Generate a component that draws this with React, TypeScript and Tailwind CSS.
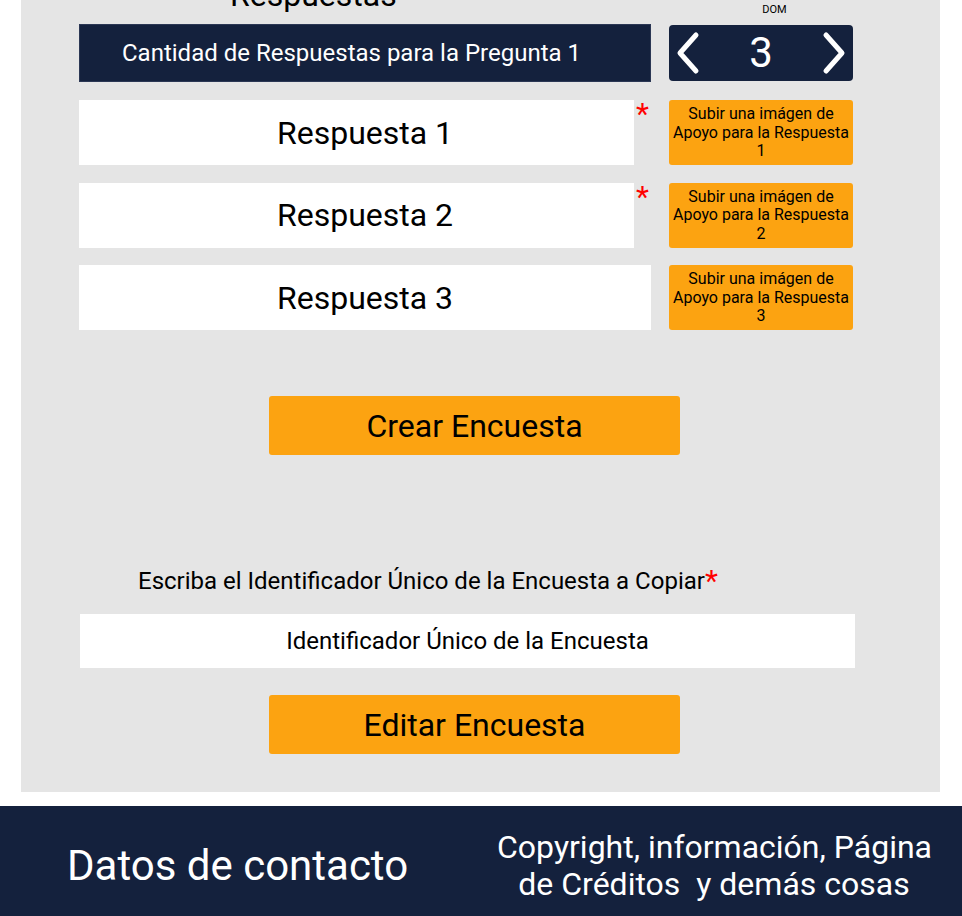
import { FC } from 'react'

const navy = 'bg-[#14213d]'

const Asterisk: FC = () => (
  <span className="block w-[17px] text-center text-[30px] leading-[30px] text-[#ff0000]">*</span>
)

const AnswerRow: FC<{ n: number; required?: boolean }> = ({ n, required }) => (
  <div className="flex h-[65px] items-stretch">
    <div className="flex w-[572px]">
      <div
        className={
          required
            ? 'flex flex-1 items-center justify-center bg-white pl-[17px] text-[32px] text-black'
            : 'flex flex-1 items-center justify-center bg-white text-[32px] text-black'
        }
      >
        Respuesta {n}
      </div>
      {required && (
        <div className="-mt-[1px]">
          <Asterisk />
        </div>
      )}
    </div>
    <button className="ml-[18px] flex w-[184px] flex-col items-center justify-center rounded-[3px] bg-[#fca311] pt-[1px] text-[16px] leading-[18.5px] text-black">
      <span>Subir una imágen de</span>
      <span>Apoyo para la Respuesta</span>
      <span>{n}</span>
    </button>
  </div>
)

const Chevron: FC<{ dir: 'left' | 'right' }> = ({ dir }) => (
  <svg width="28" height="44" viewBox="0 0 28 44" fill="none">
    <path
      d={dir === 'left' ? 'M22 4 L6 22 L22 40' : 'M6 4 L22 22 L6 40'}
      stroke="white"
      strokeWidth="5"
      strokeLinecap="round"
      strokeLinejoin="round"
    />
  </svg>
)

export default function App() {
  return (
    <div className="w-full overflow-hidden bg-white font-['Roboto',sans-serif]">
      <main className="ml-[21px] w-[919px] bg-[#e5e5e5] pb-[38px] pl-[58px]">
        <div className="flex h-[24px] items-start">
          <div className="w-[572px] pl-[151px]">
            <h2 className="-mt-[24px] text-[32px] leading-[38px] text-black">Respuestas</h2>
          </div>
          <div className="ml-[18px] flex w-[184px] justify-center pl-[27px]">
            <div className="-mt-[13px] flex flex-col items-center text-[11px] leading-[15px] text-black">
              <span>Tipo</span>
              <span>DOM</span>
            </div>
          </div>
        </div>

        <div className="flex items-start">
          <div
            className={`flex h-[58px] w-[572px] items-center border border-[#2b3754] ${navy} pl-[42px] text-[24px] text-white`}
          >
            Cantidad de Respuestas para la Pregunta 1
          </div>
          <div
            className={`ml-[18px] mt-[1px] flex h-[56px] w-[184px] items-center justify-between rounded-[4px] ${navy} px-[5px]`}
          >
            <Chevron dir="left" />
            <span className="text-[42px] leading-none text-white">3</span>
            <Chevron dir="right" />
          </div>
        </div>

        <div className="mt-[18px] flex flex-col gap-[17.5px]">
          <AnswerRow n={1} required />
          <AnswerRow n={2} required />
          <AnswerRow n={3} />
        </div>

        <button className="ml-[190px] mt-[66px] flex h-[59px] w-[411px] items-center justify-center rounded-[3px] bg-[#fca311] text-[32px] text-black">
          Crear Encuesta
        </button>

        <div className="ml-[59px] mt-[112px] flex items-start">
          <span className="text-[24px] leading-[28px] text-black">
            Escriba el Identificador Único de la Encuesta a Copiar
          </span>
          <span className="-mt-[1px] text-[30px] leading-[30px] text-[#ff0000]">*</span>
        </div>

        <div className="ml-[1px] mt-[18px] flex h-[54px] w-[775px] items-center justify-center bg-white text-[24px] text-black">
          Identificador Único de la Encuesta
        </div>

        <button className="ml-[190px] mt-[27px] flex h-[59px] w-[411px] items-center justify-center rounded-[3px] bg-[#fca311] text-[32px] text-black">
          Editar Encuesta
        </button>
      </main>

      <footer className={`mt-[14px] flex h-[120px] items-center ${navy} text-white`}>
        <div className="pl-[67px] text-[42px] leading-[48px]">Datos de contacto</div>
        <div className="ml-auto mr-[31px] w-[434px] whitespace-nowrap text-center text-[32px] leading-[37px]">
          Copyright, información, Página
          <br />
          de Créditos&nbsp; y demás cosas
        </div>
      </footer>
    </div>
  )
}
